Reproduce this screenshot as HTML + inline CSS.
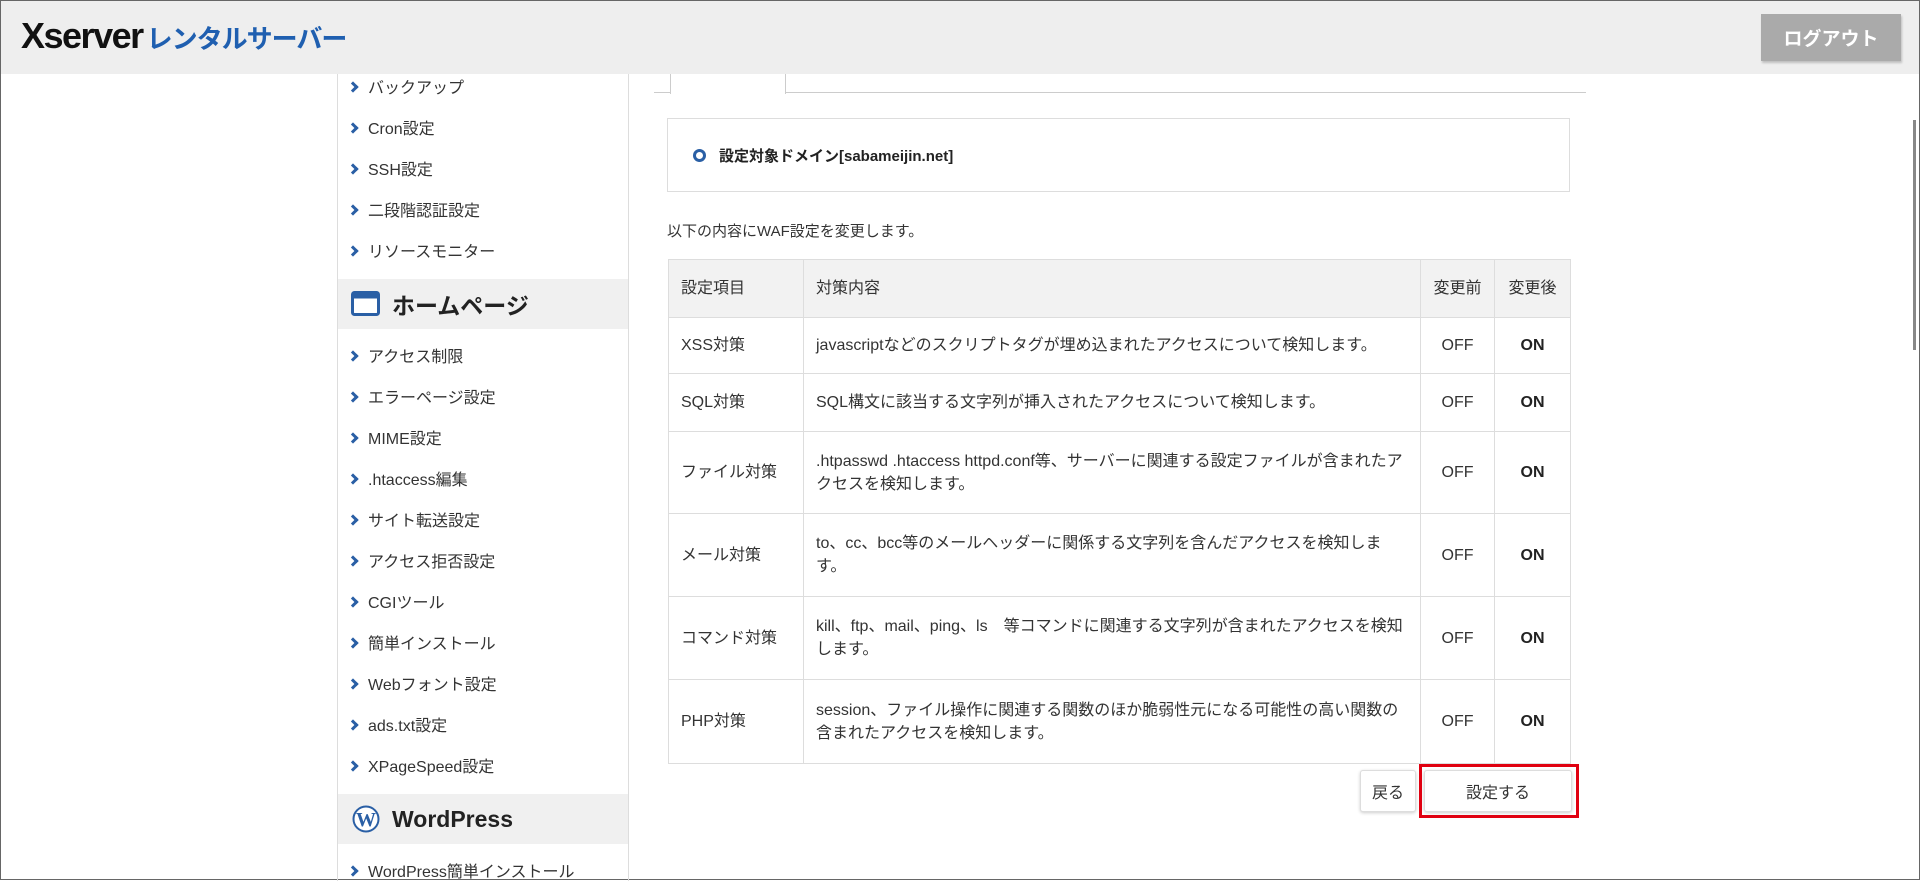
<!DOCTYPE html>
<html><head><meta charset="utf-8"><style>
*{box-sizing:border-box;margin:0;padding:0}
body{width:1920px;height:880px;overflow:hidden;background:#fff;font-family:"Liberation Sans","Noto Sans CJK JP",sans-serif;color:#333;position:relative;border:1px solid #666;}
.abs{position:absolute}
#hdr{left:0;top:0;width:1918px;height:73px;background:#eee;z-index:5}
.logo{left:20px;top:14px;font-size:36px;font-weight:bold;color:#111;letter-spacing:-1.5px;white-space:nowrap}
.logo span{color:#1f5fb0;font-size:26px;letter-spacing:-1px;margin-left:4px}
.logout{left:1760px;top:13px;width:140px;height:47px;background:#aaa;color:#fff;font-size:19px;font-weight:bold;display:flex;align-items:center;justify-content:center;box-shadow:1px 2px 2px rgba(0,0,0,.2)}
#side{left:336px;top:0;width:292px;height:880px;border-left:1px solid #ddd;border-right:1px solid #ddd}
.it{position:absolute;left:30px;font-size:16px;color:#333;white-space:nowrap;margin-top:-4px}
.it:before{content:"";position:absolute;left:-19px;top:9px;width:5px;height:5px;border-right:3px solid #2a5fa5;border-top:3px solid #2a5fa5;transform:rotate(45deg)}
.sec{position:absolute;left:0;width:290px;height:50px;background:#f0f0f0;font-size:23px;font-weight:bold;color:#222;display:flex;align-items:center;padding-left:54px}
table{position:absolute;left:667px;top:258px;width:903px;border-collapse:collapse;font-size:16px;color:#333}
td,th{border:1px solid #ddd;padding:0 12px;text-align:left;font-weight:normal;line-height:23px}
th{background:#f2f2f2}
.c{text-align:center}.b{font-weight:bold;text-align:center;color:#222}
.btn{position:absolute;background:#fff;border:1px solid #ddd;border-radius:3px;box-shadow:0 1px 3px rgba(0,0,0,.2);font-size:16px;display:flex;align-items:center;justify-content:center;color:#333}
</style></head><body>
<div id="hdr" class="abs"><div class="abs logo">Xserver<span>レンタルサーバー</span></div><div class="abs logout">ログアウト</div></div>
<div id="side" class="abs">
<div class="it" style="top:77px">バックアップ</div>
<div class="it" style="top:118px">Cron設定</div>
<div class="it" style="top:159px">SSH設定</div>
<div class="it" style="top:200px">二段階認証設定</div>
<div class="it" style="top:241px">リソースモニター</div>
<div class="sec" style="top:278px"><svg class="abs" style="left:13px;top:12px" width="30" height="26"><rect x="1.5" y="1.5" width="26" height="22" rx="2" fill="#fff" stroke="#2a5fa5" stroke-width="3"/><rect x="1.5" y="1.5" width="26" height="6" fill="#2a5fa5"/></svg>ホームページ</div>
<div class="it" style="top:346px">アクセス制限</div>
<div class="it" style="top:387px">エラーページ設定</div>
<div class="it" style="top:428px">MIME設定</div>
<div class="it" style="top:469px">.htaccess編集</div>
<div class="it" style="top:510px">サイト転送設定</div>
<div class="it" style="top:551px">アクセス拒否設定</div>
<div class="it" style="top:592px">CGIツール</div>
<div class="it" style="top:633px">簡単インストール</div>
<div class="it" style="top:674px">Webフォント設定</div>
<div class="it" style="top:715px">ads.txt設定</div>
<div class="it" style="top:756px">XPageSpeed設定</div>
<div class="sec" style="top:793px"><svg class="abs" style="left:14px;top:11px" width="28" height="28"><circle cx="14" cy="14" r="12.5" fill="#fff" stroke="#2a5fa5" stroke-width="2"/><text x="14" y="21" font-size="20" font-family="Liberation Serif" font-weight="bold" fill="#2a5fa5" text-anchor="middle">W</text></svg>WordPress</div>
<div class="it" style="top:861px">WordPress簡単インストール</div>
</div>
<div class="abs" style="left:653px;top:91px;width:932px;border-top:1px solid #ccc"></div>
<div class="abs" style="left:669px;top:60px;width:116px;height:33px;background:#fff;border:1px solid #ccc;border-bottom:none"></div>
<div class="abs" style="left:666px;top:117px;width:903px;height:74px;border:1px solid #ddd"></div>
<div class="abs" style="left:692px;top:148px;width:13px;height:13px;border:3px solid #2a5fa5;border-radius:50%"></div>
<div class="abs" style="left:718px;top:144px;font-size:15px;font-weight:bold;color:#222">設定対象ドメイン[sabameijin.net]</div>
<div class="abs" style="left:666px;top:219px;font-size:15px">以下の内容にWAF設定を変更します。</div>
<table>
<tr style="height:58px"><th style="width:135px">設定項目</th><th style="width:617px">対策内容</th><th class="c" style="width:74px">変更前</th><th class="c">変更後</th></tr>
<tr style="height:56px"><td>XSS対策</td><td>javascriptなどのスクリプトタグが埋め込まれたアクセスについて検知します。</td><td class="c">OFF</td><td class="b">ON</td></tr>
<tr style="height:58px"><td>SQL対策</td><td>SQL構文に該当する文字列が挿入されたアクセスについて検知します。</td><td class="c">OFF</td><td class="b">ON</td></tr>
<tr style="height:82px"><td>ファイル対策</td><td>.htpasswd .htaccess httpd.conf等、サーバーに関連する設定ファイルが含まれたアクセスを検知します。</td><td class="c">OFF</td><td class="b">ON</td></tr>
<tr style="height:83px"><td>メール対策</td><td>to、cc、bcc等のメールヘッダーに関係する文字列を含んだアクセスを検知します。</td><td class="c">OFF</td><td class="b">ON</td></tr>
<tr style="height:83px"><td>コマンド対策</td><td>kill、ftp、mail、ping、ls　等コマンドに関連する文字列が含まれたアクセスを検知します。</td><td class="c">OFF</td><td class="b">ON</td></tr>
<tr style="height:84px"><td>PHP対策</td><td>session、ファイル操作に関連する関数のほか脆弱性元になる可能性の高い関数の含まれたアクセスを検知します。</td><td class="c">OFF</td><td class="b">ON</td></tr>
</table>
<div class="btn" style="left:1359px;top:769px;width:56px;height:42px">戻る</div>
<div class="btn" style="left:1423px;top:769px;width:148px;height:42px">設定する</div>
<div class="abs" style="left:1418px;top:763px;width:160px;height:54px;border:3px solid #e00010"></div>
<div class="abs" style="left:1912px;top:119px;width:3px;height:230px;background:#888"></div>
</body></html>
